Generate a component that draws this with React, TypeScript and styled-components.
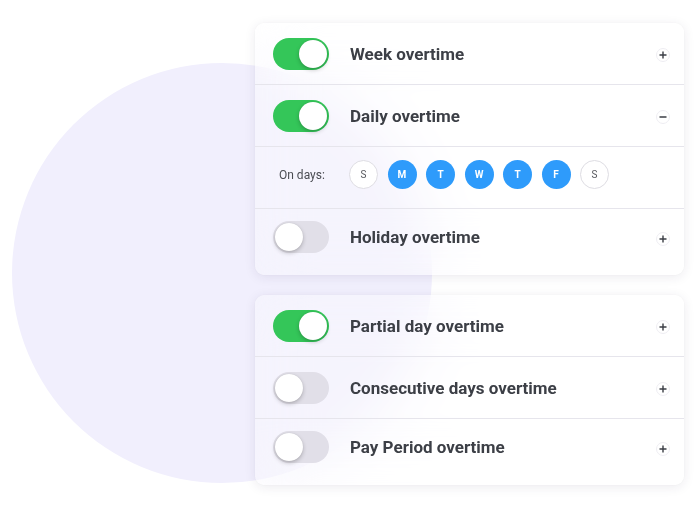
import styled, {createGlobalStyle} from "styled-components";

const GlobalStyle = createGlobalStyle`
    html, body {
        margin: 0;
        padding: 0;
        background: #ffffff;
    }
    body {
        font-family: Roboto, "Liberation Sans", Arial, sans-serif;
        -webkit-font-smoothing: antialiased;
    }
`

type Rule = { label: string; on: boolean; open?: boolean }

const topRules: Rule[] = [
    {label: "Week overtime", on: true},
    {label: "Daily overtime", on: true, open: true},
]

const bottomRules: Rule[] = [
    {label: "Partial day overtime", on: true},
    {label: "Consecutive days overtime", on: false},
    {label: "Pay Period overtime", on: false},
]

const days = [
    {d: "S", on: false},
    {d: "M", on: true},
    {d: "T", on: true},
    {d: "W", on: true},
    {d: "T", on: true},
    {d: "F", on: true},
    {d: "S", on: false},
]

function App() {
    return (
        <StyledPage>
            <GlobalStyle/>
            <StyledBlob/>
            <StyledCards>
                <StyledCard>
                    {topRules.map((r) => <RuleRow key={r.label} rule={r}/>)}
                    <StyledDaysRow>
                        <StyledDaysLabel>On days:</StyledDaysLabel>
                        <StyledDays>
                            {days.map((d, i) => (
                                <StyledDay key={i} $on={d.on}>{d.d}</StyledDay>
                            ))}
                        </StyledDays>
                    </StyledDaysRow>
                    <RuleRow rule={{label: "Holiday overtime", on: false}}/>
                </StyledCard>
                <StyledCard>
                    {bottomRules.map((r) => <RuleRow key={r.label} rule={r}/>)}
                </StyledCard>
            </StyledCards>
        </StyledPage>
    )
}

function RuleRow({rule}: { rule: Rule }) {
    return (
        <StyledRow>
            <StyledToggle $on={rule.on}>
                <StyledKnob $on={rule.on}/>
            </StyledToggle>
            <StyledLabel>{rule.label}</StyledLabel>
            <StyledExpand>
                <svg width="8" height="8" viewBox="0 0 8 8">
                    <path d="M0.5 4h7" stroke="#3a3d44" strokeWidth="1.4"/>
                    {!rule.open && <path d="M4 0.5v7" stroke="#3a3d44" strokeWidth="1.4"/>}
                </svg>
            </StyledExpand>
        </StyledRow>
    )
}

const StyledPage = styled.div`
    position: relative;
    width: 700px;
    height: 512px;
    overflow: hidden;
    background: #ffffff;
`

const StyledBlob = styled.div`
    position: absolute;
    left: 12px;
    top: 63px;
    width: 420px;
    height: 420px;
    border-radius: 50%;
    background: #f1effd;
`

const StyledCards = styled.div`
    position: relative;
    display: flex;
    flex-direction: column;
    gap: 20px;
    width: 429px;
    padding: 23px 0 0 255px;
`

const StyledCard = styled.div`
    display: flex;
    flex-direction: column;
    padding-bottom: 5px;
    border-radius: 9px;
    background: rgba(255, 255, 255, 0.3);
    backdrop-filter: blur(28px);
    box-shadow: 0 2px 12px rgba(40, 36, 80, 0.09), 0 0 2px rgba(40, 36, 80, 0.05);
    overflow: hidden;
`

const StyledRow = styled.div`
    display: flex;
    align-items: center;
    height: 61px;
    padding: 0 14px 0 18px;
    border-bottom: 1px solid #e6e5ec;

    &:last-child {
        height: 56px;
        margin-bottom: 5px;
        border-bottom: none;
    }
`

const StyledToggle = styled.div<{ $on: boolean }>`
    position: relative;
    flex: none;
    width: 56px;
    height: 32px;
    border-radius: 16px;
    background: ${(p) => (p.$on ? "#34c659" : "#e1dfe8")};
`

const StyledKnob = styled.div<{ $on: boolean }>`
    position: absolute;
    top: 2px;
    left: ${(p) => (p.$on ? "26px" : "2px")};
    width: 28px;
    height: 28px;
    border-radius: 50%;
    background: #ffffff;
    box-shadow: 0 2px 4px rgba(0, 0, 0, 0.22), 0 0 1px rgba(0, 0, 0, 0.15);
`

const StyledLabel = styled.div`
    flex: 1;
    margin-left: 21px;
    font-size: 17px;
    font-weight: 700;
    color: #3c3f46;
`

const StyledExpand = styled.div`
    display: flex;
    align-items: center;
    justify-content: center;
    width: 14px;
    height: 14px;
    margin-top: 3px;
    border-radius: 50%;
    background: #ffffff;
    border: 1px solid #eeedf2;
    box-sizing: border-box;
`

const StyledDaysRow = styled.div`
    display: flex;
    align-items: center;
    height: 55px;
    padding: 0 0 6px 24px;
    border-bottom: 1px solid #e6e5ec;
`

const StyledDaysLabel = styled.div`
    width: 70px;
    font-size: 12px;
    color: #4a4c52;
`

const StyledDays = styled.div`
    display: flex;
    gap: 9.5px;
`

const StyledDay = styled.div<{ $on: boolean }>`
    display: flex;
    align-items: center;
    justify-content: center;
    width: 29px;
    height: 29px;
    box-sizing: border-box;
    border-radius: 50%;
    font-size: 10px;
    font-weight: ${(p) => (p.$on ? 700 : 400)};
    color: ${(p) => (p.$on ? "#ffffff" : "#55575c")};
    background: ${(p) => (p.$on ? "#2e9bfb" : "#ffffff")};
    border: ${(p) => (p.$on ? "none" : "1px solid #dddce2")};
`

export default App;
